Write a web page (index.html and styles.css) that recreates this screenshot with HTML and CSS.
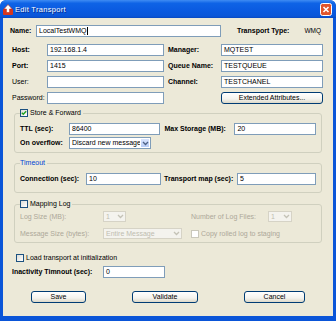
FILE: index.html
```html
<!DOCTYPE html>
<html>
<head>
<meta charset="utf-8">
<link rel="stylesheet" href="styles.css">
</head>
<body>
<div class="window">
  <div class="titlebar">
    <svg class="ticon" width="10" height="11" viewBox="0 0 10 11">
      <rect x="0" y="5" width="10" height="6" rx="1" fill="#d8361c"/>
      <polygon points="5,0.5 9.2,5 6.6,5 6.6,8.5 3.4,8.5 3.4,5 0.8,5" fill="#ffffff" stroke="#c02a10" stroke-width="0.6"/>
    </svg>
    <span class="title">Edit Transport</span>
    <span class="close">
      <svg width="12" height="13" viewBox="0 0 12 13">
        <rect x="0.5" y="0.5" width="11" height="12" rx="2" fill="#e0542c" stroke="#ffffff" stroke-width="1"/>
        <path d="M3.5 4 L8.5 9 M8.5 4 L3.5 9" stroke="#ffffff" stroke-width="1.6"/>
      </svg>
    </span>
  </div>
  <div class="body">
    <div class="row name-row">
      <span class="lbl b w26">Name:</span>
      <span class="inp w185">LocalTestWMQ<span class="caret"></span></span>
      <span class="lbl b tt">Transport Type:</span>
      <span class="lbl wmq">WMQ</span>
    </div>

    <div class="conn-grid">
      <span class="lbl b">Host:</span><span class="inp">192.168.1.4</span><span class="lbl b rl">Manager:</span><span class="inp">MQTEST</span>
      <span class="lbl b">Port:</span><span class="inp">1415</span><span class="lbl b rl">Queue Name:</span><span class="inp">TESTQUEUE</span>
      <span class="lbl">User:</span><span class="inp"></span><span class="lbl b rl">Channel:</span><span class="inp">TESTCHANEL</span>
      <span class="lbl">Password:</span><span class="inp"></span><span class="rl"></span><span class="btn">Extended Attributes...</span>
    </div>

    <fieldset class="grp g1">
      <legend class="lg"><span class="cb"><svg width="6" height="6" viewBox="0 0 6 6"><path d="M0.8 2.8 L2.3 4.3 L5.2 1.2" fill="none" stroke="#21a121" stroke-width="1.4"/></svg></span><span>Store &amp; Forward</span></legend>
      <div class="row">
        <span class="lbl b w49">TTL (sec):</span>
        <span class="inp w92">86400</span>
        <span class="lbl b w70 ml4">Max Storage (MB):</span>
        <span class="inp w82">20</span>
      </div>
      <div class="row r2">
        <span class="lbl b w49">On overflow:</span>
        <span class="sel w82"><span class="sv">Discard new message</span><span class="arr"><svg width="7" height="5" viewBox="0 0 7 5"><path d="M1 1 L3.5 3.5 L6 1" fill="none" stroke="#4d6185" stroke-width="1.3"/></svg></span></span>
      </div>
    </fieldset>

    <fieldset class="grp g2">
      <legend class="lg blue">Timeout</legend>
      <div class="row">
        <span class="lbl b w66">Connection (sec):</span>
        <span class="inp w76">10</span>
        <span class="lbl b w73 ml3">Transport map (sec):</span>
        <span class="inp w80">5</span>
      </div>
    </fieldset>

    <fieldset class="grp g3">
      <legend class="lg"><span class="cb"></span><span>Mapping Log</span></legend>
      <div class="row">
        <span class="lbl dis w83">Log Size (MB):</span>
        <span class="sel dsel w23"><span class="sv">1</span><span class="arr"><svg width="7" height="5" viewBox="0 0 7 5"><path d="M1 1 L3.5 3.5 L6 1" fill="none" stroke="#c4c2b6" stroke-width="1.3"/></svg></span></span>
        <span class="lbl dis w77 ml65">Number of Log Files:</span>
        <span class="sel dsel w24"><span class="sv">1</span><span class="arr"><svg width="7" height="5" viewBox="0 0 7 5"><path d="M1 1 L3.5 3.5 L6 1" fill="none" stroke="#c4c2b6" stroke-width="1.3"/></svg></span></span>
      </div>
      <div class="row r3">
        <span class="lbl dis w83">Message Size (bytes):</span>
        <span class="sel dsel w79"><span class="sv">Entire Message</span><span class="arr"><svg width="7" height="5" viewBox="0 0 7 5"><path d="M1 1 L3.5 3.5 L6 1" fill="none" stroke="#c4c2b6" stroke-width="1.3"/></svg></span></span>
        <span class="cb dcb ml9"></span>
        <span class="lbl dis">Copy rolled log to staging</span>
      </div>
    </fieldset>

    <div class="row load-row">
      <span class="cb"></span>
      <span class="lbl">Load transport at initialization</span>
    </div>

    <div class="row inact-row">
      <span class="lbl b w91">Inactivity Timnout (sec):</span>
      <span class="inp w62">0</span>
    </div>

    <div class="row btn-row">
      <span class="btn w55 b-save">Save</span>
      <span class="btn w66 b-gap">Validate</span>
      <span class="btn w61 b-gap">Cancel</span>
    </div>
  </div>
</div>
</body>
</html>
```

FILE: styles.css
```css
html, body {
  margin: 0;
  padding: 0;
  background: #ffffff;
}

.window {
  width: 336px;
  height: 321px;
  box-sizing: border-box;
  background: #0a55d8;
  border-radius: 6px 6px 0 0;
  display: flex;
  flex-direction: column;
  font-family: "Liberation Sans", Arial, sans-serif;
  font-size: 7px;
  color: #000;
  overflow: hidden;
}

.titlebar {
  height: 18px;
  flex: 0 0 18px;
  display: flex;
  align-items: center;
  background: linear-gradient(#3f8cf3 0%, #0e63e6 18%, #0a5ae0 60%, #0a56d8 90%, #0848c0 100%);
  border-radius: 6px 6px 0 0;
}

.ticon {
  margin-left: 3px;
  margin-top: 1px;
}

.title {
  margin-left: 2px;
  color: #ffffff;
  font-size: 7.5px;
  letter-spacing: 0.3px;
  text-shadow: 1px 1px 0 #0a2f8a;
}

.close {
  margin-left: auto;
  margin-right: 4px;
  display: flex;
}

.body {
  flex: 1;
  margin: 0 3px 5px 3px;
  background: #ece9d8;
  padding: 7px 10px 0 7px;
}

.row {
  display: flex;
  align-items: center;
  height: 12px;
}

.lbl {
  white-space: nowrap;
  flex: 0 0 auto;
  line-height: 10px;
}

.b {
  font-weight: bold;
}

.dis {
  color: #aca899;
}

.inp {
  box-sizing: border-box;
  height: 12px;
  border: 1px solid #7f9db9;
  background: #ffffff;
  padding-left: 2px;
  line-height: 10px;
  white-space: nowrap;
  overflow: hidden;
  display: flex;
  align-items: center;
}

.caret {
  display: inline-block;
  width: 1px;
  height: 8px;
  background: #000;
  margin-left: 1px;
}

.w26 { width: 26px; }
.w185 { width: 185px; }
.w49 { width: 49px; }
.w92 { width: 92px; }
.w70 { width: 70px; }
.w82 { width: 82px; }
.w66 { width: 66px; }
.w76 { width: 76px; }
.w73 { width: 73px; }
.w80 { width: 80px; }
.w83 { width: 83px; }
.w23 { width: 23px; }
.w77 { width: 77px; }
.w24 { width: 24px; }
.w79 { width: 79px; }
.w91 { width: 91px; }
.w62 { width: 62px; }
.w55 { width: 55px; }
.w61 { width: 61px; }
.ml3 { margin-left: 3px; }
.ml4 { margin-left: 4px; }
.ml9 { margin-left: 9px; }
.ml65 { margin-left: 65px; }

.name-row .tt {
  margin-left: 16px;
}

.name-row .wmq {
  margin-left: 15px;
  font-size: 6.5px;
}

.conn-grid {
  margin-top: 7px;
  margin-left: 2px;
  display: grid;
  grid-template-columns: 35px 117px 57px 102px;
  grid-auto-rows: 12px;
  row-gap: 4px;
  align-items: center;
}

.conn-grid .rl {
  padding-left: 4px;
}

.btn {
  box-sizing: border-box;
  height: 12px;
  border: 1px solid #003c74;
  border-radius: 3px;
  background: linear-gradient(#ffffff 0%, #f4f3ee 60%, #dcd8c8 100%);
  display: flex;
  align-items: center;
  justify-content: center;
  white-space: nowrap;
  line-height: 10px;
}

.grp {
  margin: 0 1px 0 4px;
  border: 1px solid #d0d0bf;
  border-radius: 3px;
  padding: 0 5px 0 5px;
  min-width: 0;
}

.lg {
  padding: 0 2px 0 0;
  margin: 0;
  height: 10px;
  line-height: 10px;
  display: flex;
  align-items: center;
  gap: 2px;
}

.lg.blue {
  color: #0046d5;
  padding: 0 2px 0 0;
}

.cb {
  box-sizing: border-box;
  width: 8px;
  height: 8px;
  flex: 0 0 8px;
  border: 1px solid #1c5180;
  background: linear-gradient(135deg, #dcdcd7 0%, #ffffff 100%);
  display: inline-flex;
  align-items: center;
  justify-content: center;
}

.dcb {
  border-color: #cac8bb;
  background: #ffffff;
  margin-right: 2px;
}

.g1 {
  margin-top: 4px;
  padding-top: 5px;
  padding-bottom: 3px;
}

.g1 .r2 {
  margin-top: 2px;
}

.g2 {
  margin-top: 5px;
  padding-top: 5px;
  padding-bottom: 7px;
}

.g3 {
  margin-top: 6px;
  padding-top: 2px;
  padding-bottom: 3px;
}

.g3 .row {
  height: 11px;
}

.g3 .r3 {
  margin-top: 6px;
}

.sel {
  box-sizing: border-box;
  height: 12px;
  border: 1px solid #7f9db9;
  background: #ffffff;
  display: flex;
  align-items: stretch;
  overflow: hidden;
}

.sel .sv {
  flex: 1;
  padding-left: 2px;
  line-height: 10px;
  white-space: nowrap;
  overflow: hidden;
  display: flex;
  align-items: center;
}

.sel .arr {
  width: 10px;
  flex: 0 0 10px;
  background: linear-gradient(#d9e4fd, #b8cdf7);
  border: 1px solid #ffffff;
  box-sizing: border-box;
  border-radius: 1px;
  display: flex;
  align-items: center;
  justify-content: center;
}

.dsel {
  height: 11px;
  border-color: #d6d3c6;
  background: #f4f3ee;
}

.dsel .sv {
  color: #c0bdb0;
  line-height: 9px;
}

.dsel .arr {
  background: #f4f3ee;
  border-color: #f4f3ee;
}

.load-row {
  margin-top: 10px;
  height: 9px;
  padding-left: 6px;
}

.load-row .cb {
  margin-right: 2px;
}

.inact-row {
  margin-top: 4px;
  padding-left: 2px;
}

.btn-row {
  margin-top: 13px;
}

.b-save {
  margin-left: 21px;
}

.b-gap {
  margin-left: 46px;
}
```
